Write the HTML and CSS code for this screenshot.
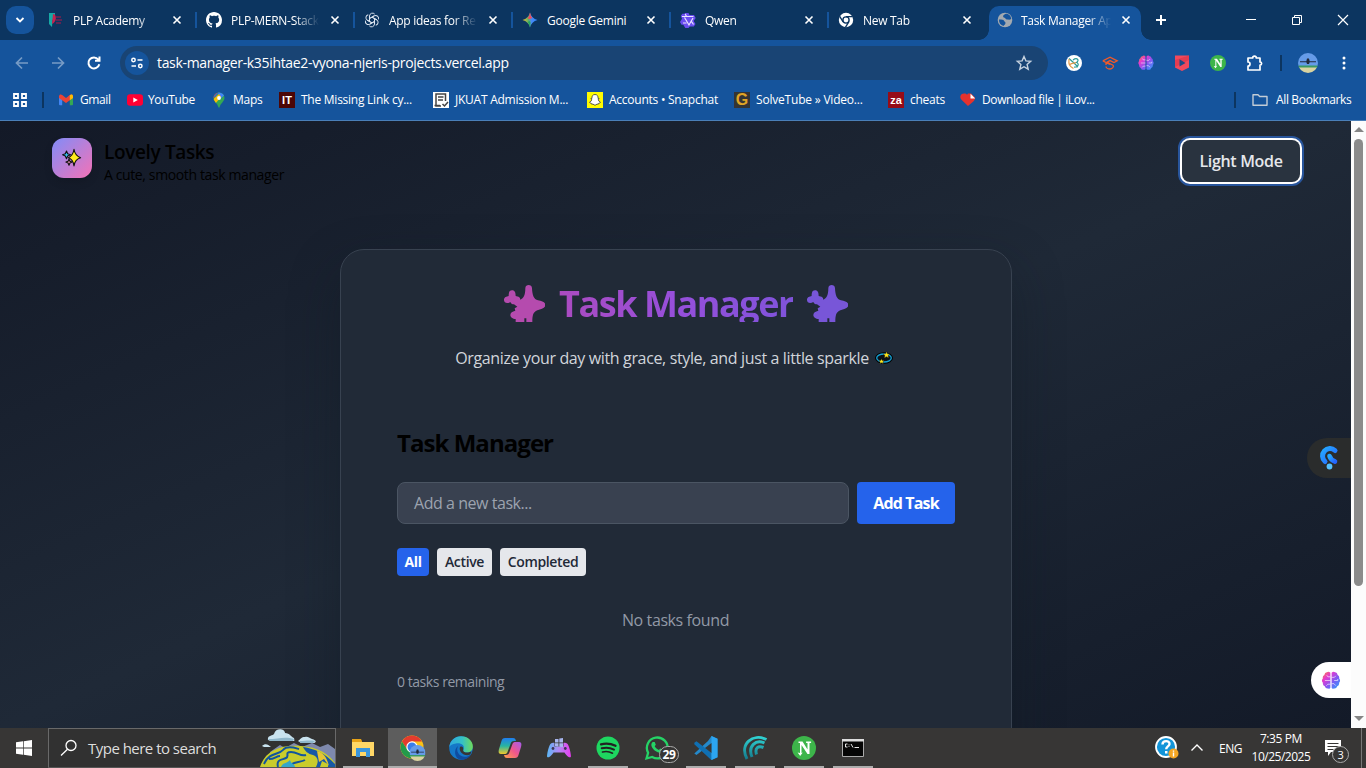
FILE: index.html
```html
<!DOCTYPE html>
<html lang="en">
<head>
<meta charset="utf-8">
<title>Task Manager App</title>
<link rel="stylesheet" href="styles.css">
</head>
<body>
<svg class="defs" width="0" height="0">
  <defs>
    <linearGradient id="gBrain" x1="0" y1="0" x2="1" y2="1"><stop offset="0" stop-color="#ff8a2c"/><stop offset=".3" stop-color="#e33ad0"/><stop offset=".62" stop-color="#7a5cf5"/><stop offset="1" stop-color="#25a8f8"/></linearGradient>
    <linearGradient id="gPod" x1="0" y1="0" x2="1" y2="1"><stop offset="0" stop-color="#25a9ff"/><stop offset="1" stop-color="#2566ff"/></linearGradient>
    <linearGradient id="gPad" x1="0" y1="0" x2="1" y2="0"><stop offset="0" stop-color="#5bb8f5"/><stop offset=".5" stop-color="#b486f5"/><stop offset="1" stop-color="#e83cf0"/></linearGradient>
    <linearGradient id="gEdge" x1="0" y1="0" x2="1" y2="0"><stop offset="0" stop-color="#2fa7df"/><stop offset=".55" stop-color="#35c1c5"/><stop offset="1" stop-color="#6fdb5a"/></linearGradient>
    <linearGradient id="gCopA" x1="0" y1="0" x2="0" y2="1"><stop offset="0" stop-color="#1f7df0"/><stop offset=".5" stop-color="#28b5a0"/><stop offset="1" stop-color="#f1c92c"/></linearGradient>
    <linearGradient id="gCopB" x1="1" y1="0" x2="0" y2="1"><stop offset="0" stop-color="#a45cf0"/><stop offset=".5" stop-color="#f0568b"/><stop offset="1" stop-color="#ffa14a"/></linearGradient>
    <linearGradient id="gGem" x1="0" y1="0" x2="1" y2="0"><stop offset="0" stop-color="#f7c325"/><stop offset=".4" stop-color="#5fae6b"/><stop offset=".6" stop-color="#4589f5"/><stop offset="1" stop-color="#3186ff"/></linearGradient>
    <linearGradient id="gFan" x1="0" y1="0" x2="0" y2="1"><stop offset="0" stop-color="#2fd0d0"/><stop offset="1" stop-color="#147a8c"/></linearGradient>
    <symbol id="brain" viewBox="0 0 18 18">
      <path fill="url(#gBrain)" d="M8.400 1.600Q6.800-.2 5 1.300 3 1.400 2.700 3.700.8 4.600 1.300 6.800-.5 9 1.300 11.200 1 13.600 3.100 14.500 4 17 6.300 16.500 7.800 17.200 8.400 15.800zM9.600 1.600Q11.200-.2 13 1.300 15 1.400 15.300 3.700 17.200 4.600 16.700 6.800 18.500 9 16.700 11.200 17 13.600 14.900 14.500 14 17 11.700 16.500 10.200 17.200 9.600 15.800z"/>
      <path fill="none" stroke="#fff" stroke-opacity=".65" stroke-width=".9" d="M8.400 5.500H6L5 4M8.400 9H3.200M8.400 12.500H6L4.600 14M9.600 6h2.600L13.500 4.600M9.600 12h2.200l1.600 1.800M12 9h3.400V7.600"/>
    </symbol>
    <symbol id="chromeMono" viewBox="0 0 16 16"><circle cx="8" cy="8" r="7.200" fill="#fff"/><circle cx="8" cy="8" r="3.100" fill="#fff" stroke="#0c3560" stroke-width="1.400"/><path d="M8 4.600h6.600M5.100 9.900 1.700 4.300M10.800 9.800l-3.400 5.600" stroke="#0c3560" stroke-width="1.300"/></symbol>
    <symbol id="bird" viewBox="0 0 24 24"><circle cx="12" cy="12" r="12" fill="#3db54a"/><path d="M6.500 5.500h4l5 8V7h-1.400V5.500h5V7H17.500v11h-2L9.500 9v8l1.300-.6-2.600 3.600-2.600-3.600L8 17V7H6.500z" fill="#fff"/></symbol>
    <symbol id="plane" viewBox="0 0 20 20"><clipPath id="cp"><circle cx="10" cy="10" r="10"/></clipPath><g clip-path="url(#cp)"><path fill="#659be8" d="M0 0h20v13H0z"/><path fill="#3c9a63" d="M0 12.500h20V15H0z"/><path fill="#d9d3a0" d="M0 14.500h20V20H0z"/><path fill="#232a3b" d="M2 8.300h16v1H2zM9 5.500h2l.8 3.300L11 11H9l-.8-2.200z"/></g></symbol>
    <symbol id="spark" viewBox="0 0 123 111"><path d="M24 16c9 0 11 8 11 17 9 1 14 4 14 11 10-4 15-14 15-34 0-13 20-13 20 0 1 20 5 33 18 36 12 3 22 5 22 14 0 10-12 11-24 16-13 5-15 16-15 35H67V100h-6v11H35v-9c-9 0-16-5-16-12s6-11 15-13l-2-7 8-5-10-7c-6 0-9-3-11-7C10 57 0 54 0 45c0-9 8-10 14-12 0-8 1-17 10-17z"/></symbol>
  </defs>
</svg>

<header class="chrome">
  <div class="tabstrip">
    <div class="tabsearch"><svg width="12" height="12" viewBox="0 0 12 12"><path d="M2.500 4 6 7.500 9.500 4" fill="none" stroke="#fff" stroke-width="1.800"/></svg></div>
    <div class="tab">
      <svg width="16" height="16" viewBox="0 0 16 16"><path fill="#17a9a5" d="M1 1h6v4L4.500 8 4 15 1 12z"/><path fill="#c8234f" d="M5 2c4 0 4 8-1 10z"/><path stroke="#7a2050" stroke-width="1.300" d="M8 5h5M8 8h6M8 11h5"/></svg>
      <span class="tab-title">PLP Academy</span><svg class="x" width="12" height="12"><path d="m2.500 2.500 7 7M9.500 2.500l-7 7"/></svg></div>
    <div class="tab">
      <svg width="16" height="16" viewBox="0 0 16 16"><path fill="#fff" d="M8 0C3.580 0 0 3.580 0 8c0 3.540 2.290 6.530 5.470 7.590.4.070.55-.17.55-.38v-1.490c-2.010.37-2.530-.49-2.690-.94-.09-.23-.48-.94-.82-1.130-.28-.15-.68-.52-.01-.53.63-.01 1.080.58 1.230.82.72 1.210 1.870.87 2.330.66.070-.52.28-.87.51-1.070-1.780-.2-3.640-.89-3.640-3.950 0-.87.31-1.590.82-2.150-.08-.2-.36-1.020.08-2.120 0 0 .67-.21 2.200.82.64-.18 1.320-.27 2-.27s1.360.09 2 .27c1.530-1.040 2.200-.82 2.200-.82.44 1.100.16 1.920.08 2.120.51.56.82 1.270.82 2.150 0 3.070-1.870 3.750-3.650 3.950.29.25.54.73.54 1.480v2.200c0 .21.15.46.55.38A8 8 0 0 0 16 8c0-4.420-3.580-8-8-8z"/></svg>
      <span class="tab-title">PLP-MERN-Stack</span><svg class="x" width="12" height="12"><path d="m2.500 2.500 7 7M9.500 2.500l-7 7"/></svg></div>
    <div class="tab">
      <svg width="16" height="16" viewBox="0 0 16 16"><g fill="none" stroke="#dfe7f2" stroke-width=".95"><path d="M5.500 9.500V4a3 3 0 0 1 5.200-1.900M5.500 6.500l4.800-2.800"/><path transform="rotate(60 8 8)" d="M5.500 9.500V4a3 3 0 0 1 5.200-1.900M5.500 6.500l4.800-2.800"/><path transform="rotate(120 8 8)" d="M5.500 9.500V4a3 3 0 0 1 5.200-1.900M5.500 6.500l4.800-2.800"/><path transform="rotate(180 8 8)" d="M5.500 9.500V4a3 3 0 0 1 5.200-1.900M5.500 6.500l4.800-2.800"/><path transform="rotate(240 8 8)" d="M5.500 9.500V4a3 3 0 0 1 5.200-1.900M5.500 6.500l4.800-2.800"/><path transform="rotate(300 8 8)" d="M5.500 9.500V4a3 3 0 0 1 5.200-1.900M5.500 6.500l4.800-2.800"/></g></svg>
      <span class="tab-title">App ideas for Re</span><svg class="x" width="12" height="12"><path d="m2.500 2.500 7 7M9.500 2.500l-7 7"/></svg></div>
    <div class="tab">
      <svg width="16" height="16" viewBox="0 0 16 16"><path fill="url(#gGem)" d="M8 .5Q9.500 6.500 15.500 8 9.500 9.500 8 15.500 6.500 9.500 .5 8 6.500 6.500 8 .5z"/><path fill="#ee4d5d" d="M8 .5Q8.500 4.500 10.300 6L7 7.300 5.700 6Q7.500 4.500 8 .5z"/><path fill="#24a65a" d="M8 15.500Q7.500 11.500 5.700 10L7.500 9l1 1.500z"/></svg>
      <span class="tab-title full">Google Gemini</span><svg class="x" width="12" height="12"><path d="m2.500 2.500 7 7M9.500 2.500l-7 7"/></svg></div>
    <div class="tab">
      <svg width="16" height="16" viewBox="0 0 16 16"><path fill="#6a4df0" d="M5 1h3.500l1 2H14l1.700 3-2 3 1.800 3-1.700 2.500h-4L8.500 16H5.300l-2-3.300H1.500L0 10l2-3.300L.8 4 2.300 1.700H4.600z"/><path fill="none" stroke="#e9e4ff" stroke-width="1.200" d="M2 4.500h11.500M4.500 5.500 9 13M13 6l-4.300 7.500M5.200 2 6.500 4.500M3 11h3.500M11.500 9.500l2 3"/></svg>
      <span class="tab-title">Qwen</span><svg class="x" width="12" height="12"><path d="m2.500 2.500 7 7M9.500 2.500l-7 7"/></svg></div>
    <div class="tab nosep">
      <svg width="16" height="16"><use href="#chromeMono"/></svg>
      <span class="tab-title">New Tab</span><svg class="x" width="12" height="12"><path d="m2.500 2.500 7 7M9.500 2.500l-7 7"/></svg></div>
    <div class="tab active">
      <svg width="16" height="16" viewBox="0 0 16 16"><circle cx="8" cy="8" r="7.300" fill="#a2a9b0"/><path fill="#15549c" d="M2 7.500c3 .2 4.500-.2 5 1.300s1.500.7 1.500 2.200-1.500 2-2 3C3.500 13 1.800 11 2 7.500zM6.500 3.300c1.500-1.200 2-1.500 3.800-1.500 2.500.9 3.700 3 3.900 5.200-1.500 1-2.800.5-4.200.5S8.500 6 7.500 5.800 5.500 4.500 6.500 3.300z"/></svg>
      <span class="tab-title">Task Manager Ap</span><svg class="x" width="12" height="12"><path d="m2.500 2.500 7 7M9.500 2.500l-7 7"/></svg></div>
    <div class="plus"></div>
    <div class="winbtns">
      <svg width="12" height="12" viewBox="0 0 12 12"><path d="M1 5.500h10" stroke="#fff"/></svg>
      <svg width="12" height="12" viewBox="0 0 12 12"><path fill="none" stroke="#fff" d="M1.500 3.500h7v7h-7zM3.500 3.500v-2h7v7h-2"/></svg>
      <svg width="12" height="12" viewBox="0 0 12 12"><path stroke="#fff" stroke-width="1.200" d="m1 1 10 10M11 1 1 11"/></svg>
    </div>
  </div>

  <div class="toolbar">
    <div class="nav">
      <svg class="dim" width="16" height="16" viewBox="0 0 16 16"><path d="M14 8H3M8 2.500 2.500 8 8 13.500"/></svg>
      <svg class="dim" width="16" height="16" viewBox="0 0 16 16"><path d="M2 8h11M8 2.500 13.500 8 8 13.500"/></svg>
      <svg width="16" height="16" viewBox="0 0 16 16"><path stroke-width="2" d="M13.300 9.200A5.500 5.500 0 1 1 12.300 4.500M13.500 1.500v4.300H9"/></svg>
    </div>
    <div class="omnibox">
      <div class="site"><svg width="14" height="14" viewBox="0 0 14 14" fill="none" stroke="#fff" stroke-width="1.500"><circle cx="3.500" cy="4" r="1.700"/><path d="M7.500 4h5M1.500 10h4.500"/><circle cx="10.300" cy="10" r="1.700"/></svg></div>
      <span class="url">task-manager-k35ihtae2-vyona-njeris-projects.vercel.app</span>
      <svg width="16" height="16" viewBox="0 0 16 16"><path fill="none" stroke="#c6d2df" stroke-width="1.400" d="m8 1.500 1.900 4.400 4.800.4-3.600 3.200 1.100 4.700L8 11.700l-4.200 2.500 1.100-4.700L1.300 6.300l4.800-.4z"/></svg>
    </div>
    <div class="exts">
      <svg width="16" height="16" viewBox="0 0 16 16"><circle cx="8" cy="8" r="8" fill="#fff"/><path fill="none" stroke="#2b9b97" stroke-width="1.200" d="M3 3.500 8 8l4 4M7 5c4-3 7 0 3.500 2.500 3 1 2 5-2.500 4.500"/><path fill="none" stroke="#e39b4b" stroke-width="1.200" d="M3 4c-.5 5 0 7 4.500 9.500M4 9.500C6 7.500 8 8.500 10 7.500"/></svg>
      <svg width="16" height="16" viewBox="0 0 16 16" fill="none" stroke="#ef5a2a" stroke-width="1.300"><path d="M.8 5.800 8 2.200l7.200 3.600-3.200 1.700L8 5.600 5 7.200l6 3c1.500 1.500-1 3.800-3 3.800s-4-1.200-4-2.500M.8 5.800 8 9.500M4 8v2"/></svg>
      <svg width="16" height="16"><use href="#brain"/></svg>
      <svg width="16" height="16" viewBox="0 0 16 16"><path fill="#f2495c" d="M1 .5h14v12L8 16l-7-3.500z"/><path fill="#d62f45" d="m1 5 14-4.500V5L1 12z" opacity=".5"/><path fill="#1d4a86" d="M5.500 4.200 11.500 8l-6 3.600z"/></svg>
      <svg width="16" height="16"><use href="#bird"/></svg>
      <svg width="18" height="18" viewBox="0 0 18 18"><path fill="none" stroke="#fff" stroke-width="1.700" stroke-linejoin="round" d="M2 4h4.700a1.800 1.800 0 0 1 3.600 0H14v4a1.600 1.600 0 0 1 0 3.200V16H2v-4a2 2 0 0 0 0-4z"/></svg>
    </div>
    <i class="vsep"></i>
    <svg class="avatar" width="20" height="20"><use href="#plane"/></svg>
    <svg class="dots" width="4" height="16" viewBox="0 0 4 16" fill="#fff"><circle cx="2" cy="3" r="1.500"/><circle cx="2" cy="8" r="1.500"/><circle cx="2" cy="13" r="1.500"/></svg>
  </div>

  <div class="bookmarks">
    <svg class="grid" width="16" height="16" viewBox="0 0 16 16" fill="none" stroke="#fff" stroke-width="1.800"><path d="M2 2h4v4H2zM10 2h4v4h-4zM2 10h4v4H2zM10 10h4v4h-4z"/></svg>
    <i class="bsep"></i>
    <div class="bm w1"><svg width="16" height="16" viewBox="0 0 16 16"><path fill="#4285f4" d="M1 4h3.200v9.300H2a1 1 0 0 1-1-1z"/><path fill="#34a853" d="M11.800 4H15v8.300a1 1 0 0 1-1 1h-2.200z"/><path fill="#ea4335" d="M1 4.500C1 2.300 3 2 4.200 3L8 6l3.800-3C13 2 15 2.300 15 4.500V6l-7 5-7-5z"/><path fill="#fbbc04" d="M11.800 3.300C13 2 15 2.300 15 4.500V6l-3.200 2.300z"/></svg><span>Gmail</span></div>
    <div class="bm w2"><svg width="16" height="16" viewBox="0 0 16 16"><rect y="2.300" width="16" height="11.400" rx="3" fill="#f03"/><path fill="#fff" d="M6.300 5.500 10.800 8l-4.500 2.500z"/></svg><span>YouTube</span></div>
    <div class="bm w3"><svg width="14" height="16" viewBox="0 0 14 16"><clipPath id="pin"><path d="M7 .5a5.500 5.500 0 0 1 5.500 5.500C12.500 9.500 8.500 11 7.500 15.500h-1C5.500 11 1.500 9.500 1.500 6A5.500 5.500 0 0 1 7 .5z"/></clipPath><g clip-path="url(#pin)"><path fill="#34a853" d="M0 0h14v16H0z"/><path fill="#4285f4" d="M6 0h8v2L7 8z"/><path fill="#ea4335" d="M0 0h6.500L2 6H0z"/><path fill="#1a73e8" d="M5 0h3L3 6 1 4z" opacity=".6"/><path fill="#fbbc04" d="M1 7.500 7 2l2 3-6 7z"/></g><circle cx="7" cy="6" r="1.900" fill="#fff"/></svg><span>Maps</span></div>
    <div class="bm w4"><b class="fav it">IT</b><span>The Missing Link cy...</span></div>
    <div class="bm w5"><svg width="16" height="16" viewBox="0 0 16 16"><path fill="#fff" d="M0 0h16v16H0z"/><path fill="none" stroke="#444" stroke-width="1.500" d="M12.500 9V2H3v12h5M5 5h5.500M5 8h5M1.500 13.500H7M9.500 12l2 2 3.500-4"/></svg><span>JKUAT Admission M...</span></div>
    <div class="bm w6"><svg width="16" height="16" viewBox="0 0 16 16"><path fill="#fffc00" d="M0 0h16v16H0z"/><path fill="#fff" stroke="#333" stroke-width=".8" d="M8 2.500c2.200 0 3.200 1.500 3.100 4l1.100.2-1 1.100c.4 1.300 1.300 2 2.300 2.400-.3.900-1.200.8-1.800 1.100l-.3.900-1.300-.1L8 13.300l-2.100-1.200-1.300.1-.3-.9c-.6-.3-1.500-.2-1.800-1.100 1-.4 1.900-1.100 2.300-2.400l-1-1.100 1.100-.2C4.800 4 5.800 2.500 8 2.500z"/></svg><span>Accounts • Snapchat</span></div>
    <div class="bm w7"><b class="fav g">G</b><span>SolveTube » Video...</span></div>
    <div class="bm w8"><b class="fav za">za</b><span>cheats</span></div>
    <div class="bm w9"><svg width="16" height="16" viewBox="0 0 16 16"><path fill="#e5322d" d="M8 14 1.500 7.800C-1 5 .8 1.500 4 1.500c1.700 0 2.500.6 3 1.200l1-1.200h3l4 4C15.500 9 11 11 8 14z"/><path fill="#fff" d="m10.500 1.800 4.700 4.700h-4.700z"/></svg><span>Download file | iLov...</span></div>
    <i class="bsep"></i>
    <div class="bm all"><svg width="16" height="14" viewBox="0 0 16 14"><path fill="none" stroke="#c2ccd6" stroke-width="1.400" stroke-linejoin="round" d="M1 1.700h5l1.700 1.800H15v8.800H1z"/></svg><span>All Bookmarks</span></div>
  </div>
</header>

<main class="viewport">
  <div class="page">
    <div class="topbar">
      <div class="brand">
        <div class="logo"><svg width="20" height="20" viewBox="0 0 20 20" stroke="#111" stroke-width="1.100" stroke-linejoin="round"><path fill="#35c1f1" d="M4.500 3 5.700 5.700 8.500 6.800 5.700 8 4.500 10.800 3.300 8 .6 6.800 3.300 5.700z"/><path fill="#f59ac0" d="m7 11 .9 2.200 2.200.9-2.200.9L7 17.200 6.100 15l-2.200-.9 2.200-.9z"/><path fill="#ffea1f" d="M12 1.300q.8 6 6.600 8.500-5.800 1.700-6.600 8.200-.8-6.500-5.600-8.200 4.800-2.500 5.600-8.500z"/></svg></div>
        <div class="brand-text"><div class="brand-name">Lovely Tasks</div><div class="brand-sub">A cute, smooth task manager</div></div>
      </div>
      <button class="mode"><span>Light Mode</span></button>
    </div>
    <section class="card">
      <h1 class="hero"><svg width="41" height="37" fill="#b54bae"><use href="#spark"/></svg><span>Task Manager</span><svg width="41" height="37" fill="#7856d8"><use href="#spark"/></svg></h1>
      <p class="lead"><span>Organize your day with grace, style, and just a little sparkle</span><svg width="18" height="14" viewBox="0 0 18 14"><ellipse cx="9" cy="7" rx="8" ry="4.800" fill="#0b1118" stroke="#000" stroke-width="2"/><ellipse cx="9" cy="7" rx="7.300" ry="4" fill="#0b1118" stroke="#16a4d8" stroke-width="1.300"/><path fill="#ffe81c" stroke="#111" stroke-width=".4" d="m11.500.5.900 2.300 2.400.2-1.700 1.600.6 2.300-2.200-1.200-2.200 1.200.6-2.300L8.200 3l2.400-.2zM6.500 7.800l.8 1.700 1.900.1-1.400 1.300.5 1.900-1.800-1-1.800 1 .5-1.900-1.400-1.300 1.900-.1z"/></svg></p>
      <div class="manager">
        <h2 class="sub">Task Manager</h2>
        <div class="add"><div class="field"><span>Add a new task...</span></div><button class="addbtn"><span>Add Task</span></button></div>
        <div class="filters"><button class="chip on">All</button><button class="chip c2">Active</button><button class="chip c3">Completed</button></div>
        <p class="empty">No tasks found</p>
        <p class="remain">0 tasks remaining</p>
      </div>
    </section>
    <div class="float pod"><svg width="20" height="24" viewBox="0 0 20 24"><path fill="none" stroke="url(#gPod)" stroke-width="5" stroke-linecap="round" d="M16 4.500A7.200 7.200 0 1 0 6 15.500"/><path fill="none" stroke="url(#gPod)" stroke-width="4.600" stroke-linecap="round" d="M10.500 10c.8 2.800 2.500 4.300 5.500 5.500"/><circle cx="10.500" cy="20.500" r="2.900" fill="#55c2ff"/></svg></div>
    <div class="float brainpill"><svg width="20" height="19"><use href="#brain"/></svg></div>
  </div>
  <div class="scroll"><i class="up"></i><i class="thumb"></i><i class="down"></i></div>
</main>

<footer class="taskbar">
  <div class="start"><svg width="16" height="16" viewBox="0 0 16 16" fill="#fff"><path d="M0 2.300 7 1.300v6.300H0zM7.700 1.200 16 0v7.600H7.700zM0 8.400h7v6.400l-7-1zM7.700 8.400H16V16l-8.300-1.200z"/></svg></div>
  <div class="search">
    <svg width="18" height="18" viewBox="0 0 18 18" fill="none" stroke="#fff" stroke-width="1.300"><circle cx="11" cy="6.500" r="5"/><path d="M7.500 10.300 1 16.500"/></svg>
    <span>Type here to search</span>
    <svg class="globe" width="75" height="38" viewBox="0 0 75 38"><path fill="#7e89ad" d="M10 23l10-7 5 3 9-5 8 4 10-4 8 4 8-3 7 5v18H10z"/><path fill="#c9cc2c" d="M0 38C5 21 22 15 41 17c17 1 28 8 34 17v4z"/><path fill="#1759a6" d="M43 18c12 2 22 6 32 17v3H56c3-6 2-10-3-12-5-1-8-4-10-8z"/><g fill="none" stroke="#11549e" stroke-width="2"><path d="M4 35c5-12 15-9 19-14s12-2 16-1M18 38c-2-8 4-7 8-9s-2-6 5-6 9 5 15 3M32 38c-2-6 8-4 13-7M9 30c6 0 7-3 11-3"/></g><path fill="#35a7c9" d="M21 38c2-5 6-3 9-7 1 4 5 4 5 7z"/><path fill="#e5c634" d="M57 22c7 2 10 7 12 15l-5-7-5 3z"/><path fill="#c9cc2c" d="M48 27c4 1 8 3 7 7l-4 4h-7c5-4 6-7 4-11zM62 32l6 3v3h-8z"/><path fill="#c9e3ef" d="M8 11c-1-5 5-4 6-6 2-7 11-5 11-1 5 0 6 4 9 5 1 4 0 3-3 3H11zM38 12c3-2 3-4 7-4 3-1 4 1 7 2 4 1 5 3 2 4H41zM2 17c3-3 6-2 9 1H4z"/><path fill="#8fb7cb" d="M8 10c10 0 17-3 26 0l-1 2H10zM39 12c7 0 9-1 16 0l-2 2H41z"/></svg>
  </div>
  <div class="apps">
    <div class="app run"><svg width="22" height="20" viewBox="0 0 22 20"><path fill="#e8a317" d="M0 1h9l1 2v4H0z"/><path fill="#ffd766" d="M0 4h22v14H0z"/><path fill="#3a96dd" d="M4 19v-9h14v9h-4v-5H8v5z"/></svg></div>
    <div class="app run wide"><svg width="26" height="26" viewBox="0 0 26 26"><circle cx="12" cy="12" r="11.500" fill="#fbc116"/><path fill="#e33b2e" d="M12 .5a11.500 11.500 0 0 1 10 6H12L7 14 2 6.500A11.500 11.500 0 0 1 12 .5z"/><path fill="#229a4b" d="M2 6.500 7.500 15l6 2-2.500 6.500A11.500 11.500 0 0 1 2 6.500z"/><circle cx="12" cy="12" r="5.700" fill="#fff"/><circle cx="12" cy="12" r="4.500" fill="#3a7de9"/><g transform="translate(9.500 10) scale(.8)"><use href="#plane" width="20" height="20"/></g></svg></div>
    <div class="app"><svg width="24" height="24" viewBox="0 0 24 24"><circle cx="12" cy="12" r="11.800" fill="#1577c8"/><path fill="url(#gEdge)" d="M.3 11C1 4.500 6 .2 12 .2c7 0 12 5 11.800 10.300 0 4-3 6-6.300 6-2.500 0-4-1-3.300-2.300C17 9 11 6.500 7 7.500 3.500 8 1.200 9 .3 11z"/><path fill="#0f4ca0" d="M9 10c-3 6 3 13 10 10.200 1.500-.5 2.700-1.800 2.500-1.200-1.500 3-5.500 5-9.500 4.800C5 23 4.500 13 9 10z"/><path fill="#373635" d="M11 11c2-1.500 3.800.5 3.200 3.200-.5 1.300 1.500 2.500 5 2.300l3.500-1-1.500 3c-6 2.500-12-3-10.200-7.500z"/></svg></div>
    <div class="app"><svg width="24" height="22" viewBox="0 0 24 22"><path fill="url(#gCopA)" d="M7 1h8c2 0 2.500 1.200 3 3h-2c-2 0-3 1-3.500 3L9.500 15c-.5 1.500-1.500 2-3 2H3c-3 0-2.500-3-2-5L3.500 4C4 2 5 1 7 1z"/><path fill="url(#gCopB)" d="M17 21H9c-2 0-2.500-1.200-3-3h2c2 0 3-1 3.500-3l3-8c.5-1.500 1.500-2 3-2H21c3 0 2.500 3 2 5l-2.500 8c-.5 2-1.500 3-3.500 3z"/></svg></div>
    <div class="app"><svg width="24" height="20" viewBox="0 0 24 20"><path fill="url(#gPad)" d="M4 5.500C5 4.500 8 4.500 9 6h6c1-1.500 4-1.500 5-.5 2 1 4.500 12 3.800 13.500-2 1.500-5-2.500-6.300-4.500h-11C5.200 16.500 2.200 20.500.2 19-.5 17.500 2 6.500 4 5.500z"/><path fill="#373635" d="M7.500 2h9v6.500h-9z"/><path fill="#a7b5ee" d="M8 1h3.500v3.500H8zM12.300.5 16 0v4.500h-3.700zM8 5.300h3.500v3.400L8 8.300zM12.300 5.300H16v4l-3.700-.5z"/><circle cx="6" cy="10.500" r="1.400" fill="#3c3556"/><circle cx="18.300" cy="10.500" r="1.400" fill="#3c3556"/></svg></div>
    <div class="app run"><svg width="24" height="24" viewBox="0 0 24 24"><circle cx="12" cy="12" r="11.500" fill="#1ed760"/><path fill="none" stroke="#222" stroke-linecap="round" d="M5 8.300q7.500-2 14.500 1.500" stroke-width="2.300"/><path fill="none" stroke="#222" stroke-linecap="round" d="M5.700 12.300q6.500-1.800 12.300 1.300" stroke-width="2"/><path fill="none" stroke="#222" stroke-linecap="round" d="M6.500 16q5.500-1.300 10 1.200" stroke-width="1.600"/></svg></div>
    <div class="app"><svg width="24" height="24" viewBox="0 0 24 24"><path fill="none" stroke="#25d366" stroke-width="2.300" d="m1.500 22.500 1.600-5.700A10.400 10.400 0 1 1 7.200 21z"/><path fill="#25d366" d="M8 6h1.700l1.100 2.700-1.100 1.500c1 1.800 2.400 3 4.200 3.800l1.400-1.600 2.700 1.300c0 2.300-1.800 3.300-3.500 3-4.500-.8-7.800-4.600-8.200-7.700C6.300 7.500 7.200 6 8 6z"/></svg><b class="badge big">29</b></div>
    <div class="app run"><svg width="24" height="24" viewBox="0 0 24 24"><path fill="#2489ca" d="m17.500 0 6 2.700v18.600l-6 2.700L8 14.800l-5.500 4.100L.3 17.600 14 5z"/><path fill="#1070b3" d="M.3 6.800 2.500 5.300 17.500 17V24L.3 8.200z"/><path fill="#2ca5f1" d="m17.500 0 6 2.700v18.600l-6 2.700z"/><path fill="#373635" d="M17.500 7v10L11 12z"/></svg></div>
    <div class="app run"><svg width="24" height="24" viewBox="0 0 24 24" fill="none" stroke="url(#gFan)" stroke-width="3"><path d="M23.500 3.500C10-3-4 8 4 23M21.500 7C13 3 4.500 10 9 21M20.500 11.500c-5-2-9 0-7 7"/></svg></div>
    <div class="app run"><svg width="24" height="24"><use href="#bird"/></svg></div>
    <div class="app run"><svg width="22" height="20" viewBox="0 0 22 20"><path fill="#050505" stroke="#aaa" d="M.5 1.500h21v17H.5z"/><path fill="#ddd" d="M0 1h22v2.500H0z"/><path fill="none" stroke="#fff" stroke-width=".9" d="M5.500 6H3.500v3h2M7 6.500v.8M7 8.200V9M9 6l2 3.500M12.500 9.500H17"/></svg></div>
  </div>
  <div class="tray">
    <svg width="24" height="24" viewBox="0 0 24 24"><circle cx="12" cy="11" r="10" fill="#1395d9" stroke="#fff" stroke-width="1.800"/><path fill="none" stroke="#fff" stroke-width="2.400" d="M8.500 8.500C8.500 4 16 4.200 15.500 8.200c-.3 2.300-3.300 2.300-3.300 5"/><path fill="#fff" d="M11 15h2.500v2.500H11z"/><circle cx="19.500" cy="17.500" r="5" fill="#f5a623"/><path fill="#fff" d="M18.800 14.500h1.400v1.300h-1.400zM18.800 16.600h1.400v4h-1.400z"/></svg>
    <svg class="caret" width="14" height="14" viewBox="0 0 14 14"><path fill="none" stroke="#fff" stroke-width="1.400" d="m1.500 9.500 5.500-5.500 5.500 5.500"/></svg>
    <span class="lang">ENG</span>
    <div class="clock"><span>7:35 PM</span><span>10/25/2025</span></div>
    <div class="note"><svg width="18" height="18" viewBox="0 0 18 18"><path fill="#fff" d="M1 1h16v12H7l-3 4v-4H1z"/><path stroke="#373635" d="M3.500 4.500h11M3.500 7.500h11M3.500 10.500h6"/></svg><b class="badge small">3</b></div>
    <i class="peek"></i>
  </div>
</footer>
</body>
</html>
```
FILE: styles.css
```css
* { box-sizing: border-box; }
body { margin: 0; width: 1366px; height: 768px; overflow: hidden; font-family: "Open Sans", "Noto Sans", sans-serif; display: flex; flex-direction: column; }
svg { display: block; flex: none; overflow: visible; }
.defs { position: absolute; }
h1, h2, p { margin: 0; }
button { font-family: inherit; border: 0; padding: 0; }
span { white-space: nowrap; }

/* browser frame */
.chrome { height: 121px; background: #15549c; color: #fff; font-size: 12px; border-bottom: 1px solid #4a7fb8; flex: none; }
.tabstrip { height: 40px; background: #0c3560; display: flex; align-items: center; padding-left: 6px; }
.tabsearch { width: 28px; height: 28px; border-radius: 10px; background: #15549c; display: grid; place-items: center; margin-right: 4px; }
.tab { width: 158px; height: 40px; display: flex; align-items: center; padding: 0 13px 0 10px; gap: 8px; position: relative; }
.tab::after { content: ""; position: absolute; right: -1px; top: 12px; width: 2px; height: 16px; background: #15549c; }
.tab.nosep::after { display: none; }
.tab-title { flex: 1; letter-spacing: -.3px; padding-left: 1px; -webkit-mask-image: linear-gradient(90deg, #000 calc(100% - 26px), transparent 98%); mask-image: linear-gradient(90deg, #000 calc(100% - 26px), transparent 98%); }
.tab-title.full { -webkit-mask-image: none; mask-image: none; letter-spacing: -.25px; }
.x { stroke: #fff; stroke-width: 1.600px; }
.tab.active { background: #15549c; width: 152px; height: 34px; margin: 6px 3px 0; border-radius: 10px 10px 0 0; padding: 0 13px 6px 8px; gap: 7px; }
.tab.active::before, .tab.active::after { content: ""; position: absolute; top: auto; bottom: 0; width: 10px; height: 10px; }
.tab.active::before { left: -10px; background: radial-gradient(circle at 0 0, transparent 9.500px, #15549c 10px); }
.tab.active::after { right: -10px; background: radial-gradient(circle at 100% 0, transparent 9.500px, #15549c 10px); }
.plus { width: 10px; height: 10px; margin-left: 12px; background: linear-gradient(#fff, #fff) center / 10px 2px no-repeat, linear-gradient(#fff, #fff) center / 2px 10px no-repeat; }
.winbtns { margin-left: auto; display: flex; gap: 34px; padding-right: 17px; }
.toolbar { height: 46px; display: flex; align-items: center; }
.nav { display: flex; gap: 20px; padding-left: 14px; width: 120px; fill: none; stroke: #fff; stroke-width: 1.700px; }
.nav .dim { opacity: .42; }
.omnibox { width: 928px; height: 34px; border-radius: 17px; background: #194474; display: flex; align-items: center; padding: 0 16px 0 5px; }
.site { width: 24px; height: 24px; border-radius: 50%; background: #15549c; display: grid; place-items: center; margin-right: 8px; }
.url { flex: 1; font-size: 14px; letter-spacing: -.33px; padding-bottom: 1px; }
.exts { display: flex; align-items: center; gap: 20px; margin-left: 18px; }
.vsep { width: 2px; height: 16px; background: #0c3560; margin-left: 16px; }
.avatar { margin-left: 16px; }
.dots { margin-left: 24px; }
.bookmarks { height: 34px; padding: 0 0 6px 12px; display: flex; align-items: center; }
.bsep { width: 2px; height: 16px; background: #0c3560; }
.grid + .bsep { margin: 0 14px; }
.bm { display: flex; align-items: center; gap: 6px; letter-spacing: -.25px; }
.bm span { padding-bottom: 1px; }
.w1 { width: 69px; letter-spacing: -.4px; }
.w2 { width: 85px; letter-spacing: -.35px; gap: 5px; }
.w3 { width: 67px; gap: 5px; }
.w3 span { margin-left: 2px; }
.w4, .w5, .w7 { width: 154px; }
.w6 { width: 147px; }
.w7 { letter-spacing: -.2px; }
.w8 { width: 72px; }
.w9 { width: 274px; letter-spacing: -.4px; }
.all { padding-left: 16px; gap: 8px; letter-spacing: -.35px; }
.fav { width: 16px; height: 16px; display: grid; place-items: center; font: bold 11px/16px "Liberation Sans", sans-serif; color: #fff; letter-spacing: 0; }
.it { background: #4c0606; } .g { background: #343434; color: #e0a526; font-size: 16px; } .za { background: #960c18; }

/* web page */
.viewport { height: 607px; flex: none; display: flex; }
.page { width: 1351px; height: 607px; overflow: hidden; position: relative; background: linear-gradient(to bottom right, #131927, #1f2937 50%, #131a28); }
.topbar { display: flex; justify-content: space-between; align-items: flex-start; padding: 15px 47px 0 52px; height: 128px; }
.brand { display: flex; gap: 12px; padding-top: 2px; }
.logo { width: 40px; height: 40px; border-radius: 12px; background: linear-gradient(135deg, #818cf8, #f472b6); display: grid; place-items: center; box-shadow: 0 4px 8px rgba(0,0,0,.12); }
.brand-text { color: #000; }
.brand-name { font-size: 19px; line-height: 28px; font-weight: 600; letter-spacing: -.36px; }
.brand-sub { font-size: 14px; line-height: 20px; letter-spacing: -.38px; margin-top: -1px; }
.mode { width: 126px; height: 50px; border-radius: 12px; border: 2px solid #28559c; background: #fff; padding: 2px; }
.mode span { display: grid; place-items: center; height: 100%; border-radius: 8px; background: #29333f; color: #e5e7eb; font-size: 16px; font-weight: 600; letter-spacing: -.33px; }
.card { width: 672px; height: 560px; margin-left: 340px; border: 1px solid #384250; border-radius: 24px; background: #212a37; box-shadow: 0 20px 50px rgba(16,24,32,.4); padding: 35px 31px 0; }
.hero { height: 37px; display: flex; justify-content: center; gap: 14px; font-size: 36px; line-height: 38px; font-weight: 700; }
.hero span { letter-spacing: -1.450px; height: 37px; background: linear-gradient(90deg, #ab4bc0, #964fdb 50%, #7f53da); -webkit-background-clip: text; background-clip: text; color: transparent; }
.lead { display: flex; justify-content: center; align-items: center; gap: 6px; margin-top: 23px; height: 26px; font-size: 16px; letter-spacing: -.36px; color: #d1d5db; padding-right: 4px; }
.manager { padding: 56px 25px 0; }
.sub { font-size: 24px; line-height: 32px; letter-spacing: -.95px; color: #000; }
.add { display: flex; gap: 8px; margin-top: 23px; height: 42px; }
.field { width: 452px; border: 1px solid #4b5563; border-radius: 8px; background: #394150; color: #9ca3af; font-size: 16px; padding: 0 16px; display: flex; align-items: center; letter-spacing: -.45px; }
.addbtn { width: 98px; border-radius: 4px; background: #2563eb; color: #fff; font-size: 16px; font-weight: 700; letter-spacing: -.85px; }
.filters { display: flex; gap: 8px; margin-top: 24px; }
.chip { height: 28px; border-radius: 4px; background: #e5e7eb; color: #1f2937; font-size: 14px; font-weight: 600; letter-spacing: -.35px; width: 32px; padding-bottom: 1px; }
.chip.on { background: #2563eb; color: #fff; font-weight: 700; }
.c2 { width: 55px; } .c3 { width: 86px; }
.empty { margin-top: 32px; text-align: center; line-height: 24px; font-size: 16px; letter-spacing: -.4px; color: #9299a6; padding-right: 1px; }
.remain { margin-top: 40px; line-height: 20px; font-size: 14px; letter-spacing: -.45px; color: #9299a6; }
.float { position: absolute; right: 0; display: flex; align-items: center; }
.pod { top: 317px; width: 44px; height: 40px; border-radius: 20px 0 0 20px; background: #2a2c2c; padding-left: 12px; }
.brainpill { top: 541px; width: 40px; height: 36px; border-radius: 18px 0 0 18px; background: #fff; padding-left: 10px; }
.scroll { width: 15px; background: #fcfcfc; display: flex; flex-direction: column; align-items: center; padding: 6px 0 7px; }
.up, .down { border: 5px solid transparent; border-top: 0; border-bottom: 5px solid #858585; }
.down { border-top: 5px solid #858585; border-bottom: 0; margin-top: auto; }
.thumb { width: 9px; height: 447px; margin-top: 7px; border-radius: 5px; background: #8b8b8b; }

/* desktop taskbar */
.taskbar { height: 40px; flex: none; background: #373635; display: flex; color: #fff; }
.start { width: 48px; display: grid; place-items: center; }
.search { width: 288px; border: 1px solid #696969; border-bottom-color: #555; background: #313131; display: flex; align-items: center; padding-left: 11px; font-size: 15px; letter-spacing: -.52px; color: #dedede; overflow: hidden; }
.search span { margin-left: 10px; }
.globe { margin-left: auto; }
.apps { display: flex; margin-left: 3px; }
.app { width: 49px; height: 40px; display: grid; place-items: center; position: relative; padding-right: 2px; }
.app.run::after { content: ""; position: absolute; left: 4px; right: 5px; bottom: 0; height: 2px; background: #adadad; }
.app.wide { background: #5d5d5d; padding: 0; }
.app.run.wide::after { left: 0; right: 0; }
.badge { position: absolute; display: grid; place-items: center; background: #373635; border: 1px solid #aaa; border-radius: 9px; }
.big { right: 3px; bottom: 5px; width: 20px; height: 17px; font-size: 12px; line-height: 14px; letter-spacing: -.3px; }
.small { left: 8px; top: 7px; width: 17px; height: 17px; font-size: 11px; font-weight: 400; }
.tray { margin-left: auto; display: flex; align-items: center; width: 212px; font-size: 12px; letter-spacing: -.5px; }
.caret { margin-left: 12px; }
.lang { margin-left: 15px; }
.clock { width: 60px; margin-left: 9px; display: flex; flex-direction: column; align-items: center; line-height: 18px; }
.clock span:first-child { letter-spacing: -.4px; }
.note { position: relative; margin-left: 13px; }
.peek { width: 1px; height: 40px; background: #777; margin-left: auto; margin-right: 4px; }
```
